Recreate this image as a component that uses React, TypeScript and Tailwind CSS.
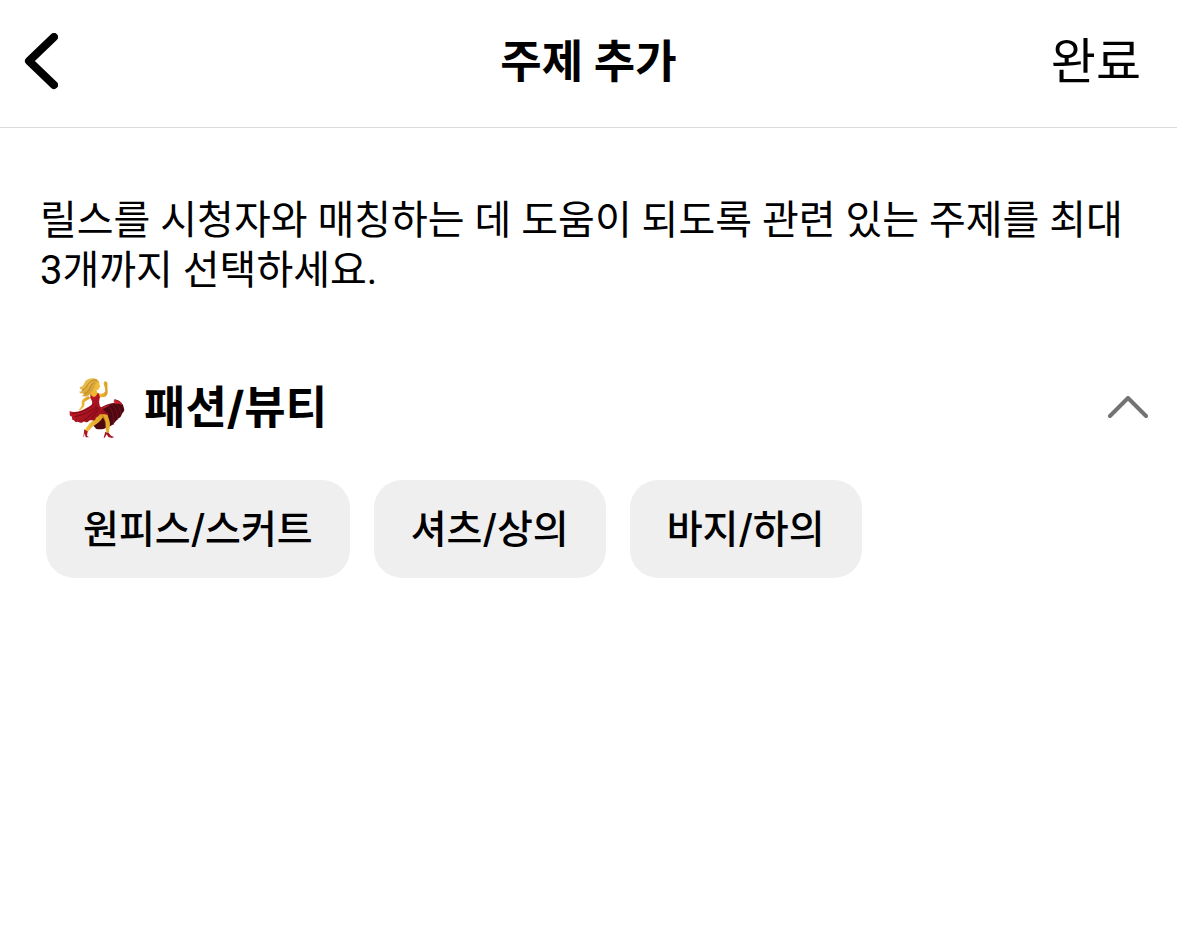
import { useState } from 'react';

const topics = ['원피스/스커트', '셔츠/상의', '바지/하의'];

function BackIcon() {
  return (
    <svg viewBox="0 0 34 58" className="h-[58px] w-[34px]" fill="none" aria-hidden="true">
      <path d="M30 4 5 28 30 52" stroke="currentColor" strokeWidth="8" strokeLinecap="round" strokeLinejoin="round" />
    </svg>
  );
}

function ChevronIcon({ open }: { open: boolean }) {
  return (
    <svg viewBox="0 0 42 24" className={open ? 'h-6 w-[42px]' : 'h-6 w-[42px] rotate-180'} fill="none" aria-hidden="true">
      <path d="M3 20 21 2 39 20" stroke="#737373" strokeWidth="4" strokeLinecap="round" strokeLinejoin="round" />
    </svg>
  );
}

function DancerIcon() {
  return (
    <svg viewBox="27 27 174 186" className="h-[62px] w-[58px] shrink-0" aria-hidden="true">
      <defs>
        <linearGradient id="hair" x1="0" y1="0" x2="1" y2="1">
          <stop offset="0" stopColor="#f3cf62" />
          <stop offset="1" stopColor="#c98a1c" />
        </linearGradient>
        <linearGradient id="skin" x1="0" y1="0" x2="1" y2="0">
          <stop offset="0" stopColor="#f4c542" />
          <stop offset="1" stopColor="#d99a1f" />
        </linearGradient>
        <linearGradient id="dress" x1="0" y1="0" x2="1" y2="1">
          <stop offset="0" stopColor="#d01f2b" />
          <stop offset="1" stopColor="#8d0b19" />
        </linearGradient>
      </defs>
      {/* inside of the skirt */}
      <path d="M118 124C134 112 150 106 168 104L166 94C177 95 189 103 193 114L196 126C194 134 187 137 186 144C184 151 176 150 174 156C168 160 165 169 158 172C152 178 146 173 141 180C132 185 122 184 112 183L104 174Z" fill="#4c0710" />
      <path d="M148 116C160 125 166 144 162 171M158 110C171 120 177 134 176 155M168 104C180 115 186 128 186 142" stroke="#74101d" strokeWidth="3" fill="none" />
      {/* back arm */}
      <path d="M88 84C77 89 68 95 68 103C71 112 66 119 58 126L63 127C72 121 79 112 76 103C82 98 90 94 94 91Z" fill="url(#skin)" />
      {/* legs */}
      <path d="M116 136 136 139C132 153 121 163 109 170C99 175 93 184 84 194L76 188C83 178 89 168 99 160C106 154 109 147 110 140Z" fill="url(#skin)" />
      <path d="M132 134 146 137C146 148 153 158 153 168C153 178 149 187 150 199L142 199C143 188 138 178 140 167C138 156 132 149 130 142Z" fill="#e3aa2d" />
      <path d="M132 143 139 160 139 170" stroke="#a66d18" strokeWidth="2" fill="none" />
      <path d="M76 184C79 187 83 189 86 190L84 203 90 208 80 208 77 195 75 206 73 206Z" fill="#a91524" />
      <path d="M139 191C143 195 148 194 150 196L156 203 165 207 159 210 148 207 143 199 137 209 134 209Z" fill="#a91524" />
      {/* front arm */}
      <path d="M117 75C126 78 134 79 139 70L137 56C133 49 133 42 138 40C143 40 147 45 145 52L146 74C144 86 134 91 120 86Z" fill="url(#skin)" />
      {/* neck and face */}
      <path d="M92 69 110 62 117 77 119 87 95 92Z" fill="#efb832" />
      <path d="M100 37C112 32 123 39 121 49L124 57 120 60C120 66 114 68 108 66L96 56Z" fill="#f0bd3b" />
      {/* hair */}
      <path d="M87 34C103 27 118 33 120 43C112 43 109 48 108 55C105 67 99 68 95 76C90 85 80 87 68 84C75 82 76 78 71 76C65 78 62 76 61 70C66 72 69 69 69 65C63 64 61 60 63 56C69 58 74 52 77 43C79 38 82 36 87 34Z" fill="url(#hair)" />
      <path d="M114 36C99 35 90 42 84 54C80 62 75 66 69 67M106 43C96 49 94 59 90 66C86 73 81 76 75 77" stroke="#a96e13" strokeWidth="2" fill="none" />
      {/* dress */}
      <path d="M95 78C98 84 102 87 105 87C110 86 114 81 115 76L119 76 123 88C120 97 119 105 123 115L134 126C143 135 149 140 148 143C141 137 132 139 122 139C118 148 111 145 109 155C104 161 94 152 89 160C82 168 77 157 72 162C65 169 58 158 53 162C48 165 46 155 42 156C37 155 42 147 36 145C30 143 33 133 32 129C50 137 76 126 98 110C102 101 97 96 94 89Z" fill="url(#dress)" />
      <path d="M113 113C98 128 77 140 47 146M115 117C106 133 89 145 73 159M119 120C113 134 105 142 98 151M103 109C90 124 65 135 40 136" stroke="#760915" strokeWidth="3" fill="none" />
      <path d="M101 98C108 102 114 100 119 97M103 106C109 109 115 108 121 105" stroke="#980c1c" strokeWidth="2" fill="none" />
      <path d="M165 96C169 106 154 108 139 120L124 125C133 111 151 108 163 107Z" fill="#be1b2b" />
      <path d="M165 95C178 95 190 104 192 112C185 107 176 106 167 108Z" fill="#c52231" />
    </svg>
  );
}

export default function App() {
  const [open, setOpen] = useState(true);
  const [selected, setSelected] = useState<string[]>([]);

  const toggleTopic = (topic: string) => {
    setSelected((current) => {
      if (current.includes(topic)) return current.filter((item) => item !== topic);
      return current.length < 3 ? [...current, topic] : current;
    });
  };

  return (
    <div className="min-h-screen bg-white font-['Inter','Noto_Sans_CJK_KR',sans-serif] text-black">
      <header className="grid h-32 grid-cols-[1fr_auto_1fr] items-center border-b border-[#dbdbdb] px-6 pb-1">
        <button type="button" aria-label="뒤로" className="justify-self-start">
          <BackIcon />
        </button>
        <h1 className="text-[45px] font-bold">주제 추가</h1>
        <button type="button" className="justify-self-end pr-3 text-[49px]">
          완료
        </button>
      </header>

      <main className="px-10 pt-17">
        <p className="font-['Roboto','Noto_Sans_CJK_KR',sans-serif] text-[40px] leading-[50px]">
          릴스를 시청자와 매칭하는 데 도움이 되도록 관련 있는 주제를 최대 3개까지 선택하세요.
        </p>

        <section className="mt-20">
          <h2 className="-mr-3 ml-7">
            <button
              type="button"
              aria-expanded={open}
              onClick={() => setOpen(!open)}
              className="flex h-16 w-full items-center gap-[18px] text-left text-[45px] font-bold"
            >
              <DancerIcon />
              <span className="flex-1">패션/뷰티</span>
              <ChevronIcon open={open} />
            </button>
          </h2>
          {open && (
            <div className="ml-[6px] mt-10 flex flex-wrap gap-6">
              {topics.map((topic) => (
                <button
                  key={topic}
                  type="button"
                  aria-pressed={selected.includes(topic)}
                  onClick={() => toggleTopic(topic)}
                  className="rounded-[28px] bg-[#efefef] px-[37px] py-6 text-[39px] font-medium leading-[50px] aria-pressed:bg-black aria-pressed:text-white"
                >
                  {topic}
                </button>
              ))}
            </div>
          )}
        </section>
      </main>
    </div>
  );
}
